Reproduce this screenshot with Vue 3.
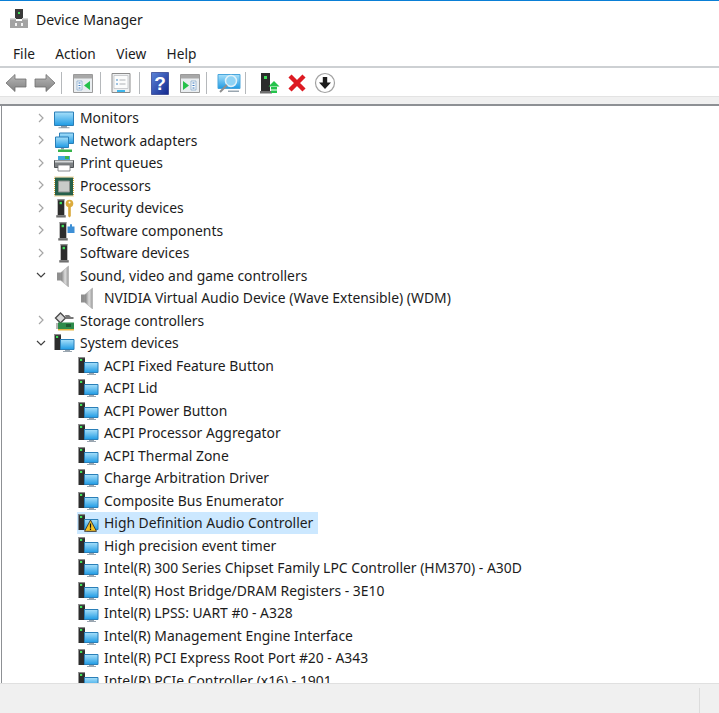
<script setup>
const rows = [
  { label: 'Monitors', icon: 'monitor', state: 'closed' },
  { label: 'Network adapters', icon: 'network', state: 'closed' },
  { label: 'Print queues', icon: 'printer', state: 'closed' },
  { label: 'Processors', icon: 'cpu', state: 'closed' },
  { label: 'Security devices', icon: 'security', state: 'closed' },
  { label: 'Software components', icon: 'softcomp', state: 'closed' },
  { label: 'Software devices', icon: 'tower', state: 'closed' },
  { label: 'Sound, video and game controllers', icon: 'speaker', state: 'open' },
  { label: 'NVIDIA Virtual Audio Device (Wave Extensible) (WDM)', icon: 'speaker', child: true },
  { label: 'Storage controllers', icon: 'storage', state: 'closed' },
  { label: 'System devices', icon: 'system', state: 'open' },
  { label: 'ACPI Fixed Feature Button', icon: 'system', child: true },
  { label: 'ACPI Lid', icon: 'system', child: true },
  { label: 'ACPI Power Button', icon: 'system', child: true },
  { label: 'ACPI Processor Aggregator', icon: 'system', child: true },
  { label: 'ACPI Thermal Zone', icon: 'system', child: true },
  { label: 'Charge Arbitration Driver', icon: 'system', child: true },
  { label: 'Composite Bus Enumerator', icon: 'system', child: true },
  { label: 'High Definition Audio Controller', icon: 'system', child: true, selected: true, warn: true },
  { label: 'High precision event timer', icon: 'system', child: true },
  { label: 'Intel(R) 300 Series Chipset Family LPC Controller (HM370) - A30D', icon: 'system', child: true },
  { label: 'Intel(R) Host Bridge/DRAM Registers - 3E10', icon: 'system', child: true },
  { label: 'Intel(R) LPSS: UART #0 - A328', icon: 'system', child: true },
  { label: 'Intel(R) Management Engine Interface', icon: 'system', child: true },
  { label: 'Intel(R) PCI Express Root Port #20 - A343', icon: 'system', child: true },
  { label: 'Intel(R) PCIe Controller (x16) - 1901', icon: 'system', child: true }
]
const menus = ['File', 'Action', 'View', 'Help']
</script>

<template>
  <div class="window">
    <svg class="defs" aria-hidden="true">
      <defs>
        <linearGradient id="scr" x1="0" y1="0" x2="0" y2="1">
          <stop offset="0" stop-color="#a8e0fa" />
          <stop offset="1" stop-color="#1f9be4" />
        </linearGradient>
        <linearGradient id="spk" x1="0" y1="0" x2="1" y2="0">
          <stop offset="0" stop-color="#7c7c7c" />
          <stop offset=".55" stop-color="#dcdcdc" />
          <stop offset="1" stop-color="#9a9a9a" />
        </linearGradient>
        <linearGradient id="arr" x1="0" y1="0" x2="0" y2="1">
          <stop offset="0" stop-color="#b8b8b8" />
          <stop offset="1" stop-color="#808080" />
        </linearGradient>
        <linearGradient id="hlp" x1="0" y1="0" x2="1" y2="1">
          <stop offset="0" stop-color="#5b84d8" />
          <stop offset="1" stop-color="#13288e" />
        </linearGradient>
        <symbol id="tw" viewBox="0 0 10 20">
          <path d="M1.500 0h7v17h-7z" fill="#2c2c2c" />
          <path d="M1.500 0h7v1.500h-7z" fill="#8a8a8a" />
          <path d="M3.500 3h2.500v2.500H3.500z" fill="#3fe05a" />
          <path d="M0 17h10v2.500H0z" fill="#6e6e6e" />
        </symbol>
        <symbol id="i-monitor" viewBox="0 0 22 22">
          <path d="M1.500 5h19v13.500h-19z" fill="url(#scr)" stroke="#2a7fb8" />
          <path d="M8 19h6v1.200H8zM5.500 20.200h11v1H5.500z" fill="#8f9ba6" />
        </symbol>
        <symbol id="i-network" viewBox="0 0 22 22">
          <path d="M6.500 3h14v10.500h-14z" fill="url(#scr)" stroke="#2a7fb8" />
          <path d="M2.500 7h13v10.500h-13z" fill="url(#scr)" stroke="#2a7fb8" />
          <path d="M8 18h3v1.500H8z" fill="#8f9ba6" />
          <path d="M5 19.500h14V22H5z" fill="#35b34a" />
        </symbol>
        <symbol id="i-printer" viewBox="0 0 22 22">
          <path d="M5 4h12v5H5z" fill="#3fa7dc" />
          <path d="M12 4h4v3h-4z" fill="#39b54a" />
          <path d="M1.500 8.500h19v7h-19z" fill="#7d8184" stroke="#4f5255" />
          <path d="M2 8.500h18v2H2z" fill="#d5d7d9" />
          <path d="M5 13h12v6H5z" fill="#fff" stroke="#6d7073" stroke-width=".8" />
        </symbol>
        <symbol id="i-cpu" viewBox="0 0 22 22">
          <path d="M2 2.500h18v18H2z" fill="#26604a" />
          <path d="M1.500 2h19v19h-19z" fill="none" stroke="#d8a93f" stroke-dasharray="1 1" />
          <path d="M5.500 6h11v11h-11z" fill="#c9cbc8" stroke="#8c8f8c" />
        </symbol>
        <symbol id="i-security" viewBox="0 0 22 22">
          <use href="#tw" x="3" y="2" width="10" height="19" />
          <circle cx="16.500" cy="6.500" r="3.800" fill="#dcab3c" />
          <circle cx="16.500" cy="5.500" r="1" fill="#fff" />
          <path d="M15.200 9.500h2.600v9.500l-1.200 1.500-1.400-1.300z" fill="#d9a83a" />
        </symbol>
        <symbol id="i-softcomp" viewBox="0 0 22 22">
          <use href="#tw" x="5" y="2" width="10" height="19" />
          <path d="M14.500 6.500h2.500V4.500a1.300 1.300 0 0 1 2 0v2h2.500V13h-7z" fill="#3d8fd6" />
        </symbol>
        <symbol id="i-tower" viewBox="0 0 22 22">
          <use href="#tw" x="6" y="2" width="10" height="19" />
        </symbol>
        <symbol id="i-speaker" viewBox="0 0 22 22">
          <path d="M4 7.500h4v8H4z" fill="#8e8e8e" />
          <path d="M8 7.500 15.500 1v21L8 15.500z" fill="url(#spk)" stroke="#a4a4a4" stroke-width=".5" />
        </symbol>
        <symbol id="i-storage" viewBox="0 0 22 22">
          <path d="M7.500 3 12.500 8 7.500 13 2.500 8z" fill="#d8d8d8" stroke="#4c4c4c" stroke-width="1.400" />
          <path d="M12 5h4l2 2h2.500v2H13z" fill="#777" />
          <path d="M3 13h2v6H3z" fill="#b5b5b5" />
          <path d="M5 12.500h16V19H5z" fill="#2e8b4a" />
          <path d="M5 19h16v1.500H5z" fill="#e1b341" />
          <path d="M13 14h5v3h-5z" fill="#1f5a32" />
        </symbol>
        <symbol id="i-system" viewBox="0 0 22 22">
          <path d="M1.500 2h6.500v16H1.500z" fill="#2c2c2c" />
          <path d="M1.500 2h6.500v1.200H1.500z" fill="#8a8a8a" />
          <path d="M3 4h2.200v2H3z" fill="#3fe05a" />
          <path d="M7.500 7.500h13.500v10H7.500z" fill="url(#scr)" stroke="#2a7fb8" />
          <path d="M12 18h5v1h-5zM10 19h9v1h-9z" fill="#9aa6b0" />
        </symbol>
      </defs>
    </svg>

    <header class="titlebar">
      <svg class="app-icon" viewBox="0 0 18 20">
        <path d="M5 0h8v10H5z" fill="#3a3a3a" />
        <path d="M8 3h2v2H8z" fill="#3fe05a" />
        <path d="M0 9h6v3h6V9h6v10H0z" fill="#a3a3a3" />
        <path d="M0 9h6v1.500H0zM12 9h6v1.500h-6z" fill="#d8d8d8" />
        <path d="M5 14h2v3H5zM11 14h2v3h-2z" fill="#f2f2f2" />
      </svg>
      <span class="title">Device Manager</span>
    </header>

    <nav class="menubar">
      <span v-for="m in menus" :key="m" class="menu">{{ m }}</span>
    </nav>

    <div class="toolbar">
      <div class="tg g1">
        <svg class="tool" viewBox="0 0 24 24"><path d="M2 12 11 3.500V8h11v8H11v4.500z" fill="url(#arr)" stroke="#6f6f6f" stroke-width=".8" /></svg>
        <svg class="tool" viewBox="0 0 24 24"><path d="M22 12 13 3.500V8H2v8h11v4.500z" fill="url(#arr)" stroke="#6f6f6f" stroke-width=".8" /></svg>
      </div>
      <div class="tg g2">
        <svg class="tool" viewBox="0 0 24 24">
          <path d="M2.500 3.500h19v18h-19z" fill="#e9edf0" stroke="#9b9b9b" />
          <path d="M3 4h18v3.500H3z" fill="#a8a8a8" />
          <path d="M6 10h5v9H6z" fill="#f7f9fb" stroke="#7fa3c7" stroke-width=".7" />
          <path d="M7.500 12h2M7.500 14.500h2M7.500 17h2" stroke="#3d7cc0" />
          <path d="M19 10v9l-6-4.500z" fill="#25c14a" />
        </svg>
      </div>
      <div class="tg g3">
        <svg class="tool" viewBox="0 0 24 24">
          <path d="M3 2.500h18v19H3z" fill="#eef0f1" stroke="#8c8c8c" />
          <path d="M5 4.500h14v13H5z" fill="#fbfcfc" stroke="#b9bcbf" stroke-width=".7" />
          <path d="M7 8h2v2H7zM7 12h2v2H7z" fill="#9ec3e2" />
          <path d="M10.500 9h6M10.500 13h6" stroke="#aeb2b6" />
          <path d="M8 19h8v2H8z" fill="#3db5ea" />
        </svg>
      </div>
      <div class="tg g4">
        <svg class="tool" viewBox="0 0 24 24">
          <path d="M3.500 1.500h17v22h-17z" fill="url(#hlp)" stroke="#12237a" stroke-width=".6" />
          <text x="12" y="19" text-anchor="middle" class="qm">?</text>
        </svg>
        <svg class="tool" viewBox="0 0 24 24">
          <path d="M2.500 3.500h19v18h-19z" fill="#e9edf0" stroke="#9b9b9b" />
          <path d="M3 4h18v3.500H3z" fill="#a8a8a8" />
          <path d="M5 10v9l6-4.500z" fill="#25c14a" />
          <path d="M13 10h5v9h-5z" fill="#f7f9fb" stroke="#7fa3c7" stroke-width=".7" />
          <path d="M14.500 12h2M14.500 14.500h2M14.500 17h2" stroke="#3d7cc0" />
        </svg>
      </div>
      <div class="tg g5">
        <svg class="tool" viewBox="0 0 24 24">
          <path d="M1 3.500h22v14H1z" fill="url(#scr)" stroke="#4aa6dc" />
          <circle cx="14" cy="10" r="5.500" fill="#8fd3f5" stroke="#dff1f9" stroke-width="1.500" />
          <path d="M10 14 3 21" stroke="#8f8f8f" stroke-width="2" />
          <path d="M11 19.500h11v1.500H11z" fill="#9aa6b0" />
        </svg>
      </div>
      <div class="tg g6">
        <svg class="tool" viewBox="0 0 24 24">
          <path d="M4 2h9v18H4z" fill="#2c2c2c" />
          <path d="M7 5h3v3H7z" fill="#3fe05a" />
          <path d="M3 20h12v2.500H3z" fill="#6e6e6e" />
          <path d="M11.500 15.500 17 10l5.500 5.500z" fill="#24c34b" />
          <path d="M14 16h6v2.500h-6zM14 19.500h6V22h-6z" fill="#24c34b" />
        </svg>
        <svg class="tool" viewBox="0 0 24 24">
          <path d="M5 5 19 19M19 5 5 19" stroke="#dd1a22" stroke-width="4.400" />
        </svg>
        <svg class="tool" viewBox="0 0 24 24">
          <circle cx="12" cy="12" r="9.500" fill="#fff" stroke="#a2a2a2" stroke-width="1.200" />
          <path d="M9.800 6h4.400v5.500H18L12 18 6 11.500h3.800z" fill="#1c1c1c" />
        </svg>
      </div>
    </div>

    <div class="strip"></div>

    <main class="tree">
      <div v-for="r in rows" :key="r.label" class="row" :class="{ child: r.child }">
        <span class="chev">
          <svg v-if="r.state === 'closed'" viewBox="0 0 10 10" class="chev-i"><path d="M3 1l4 4-4 4" fill="none" stroke="#a6a6a6" stroke-width="1.200" /></svg>
          <svg v-else-if="r.state === 'open'" viewBox="0 0 10 10" class="chev-i"><path d="M1 3l4 4 4-4" fill="none" stroke="#404040" stroke-width="1.200" /></svg>
        </span>
        <span class="item" :class="{ selected: r.selected }">
          <span class="icon-wrap">
            <svg class="icon"><use :href="'#i-' + r.icon" /></svg>
            <svg v-if="r.warn" class="warn" viewBox="0 0 13 13">
              <path d="M6.500 1 12.500 12.300H.5z" fill="#f7c325" stroke="#333" stroke-width=".9" />
              <path d="M5.900 4.500h1.200v4.300H5.900zM5.900 9.600h1.200v1.300H5.900z" fill="#111" />
            </svg>
          </span>
          <span class="label">{{ r.label }}</span>
        </span>
      </div>
    </main>

    <footer class="status">
      <span class="status-sep"></span>
    </footer>
  </div>
</template>

<style scoped>
.window {
  height: 713px;
  display: flex;
  flex-direction: column;
  overflow: hidden;
  background: #fff;
  border-top: 1px solid #0a7fd6;
  box-sizing: border-box;
  font-family: "Noto Sans", "Open Sans", sans-serif;
  color: #1c1c1c;
}
.defs {
  position: absolute;
  width: 0;
  height: 0;
}
.titlebar {
  height: 39px;
  flex: none;
  display: flex;
  align-items: center;
  padding-left: 10px;
  padding-bottom: 3px;
  box-sizing: border-box;
}
.app-icon {
  width: 18px;
  height: 20px;
  margin-right: 8px;
}
.title {
  font-size: 14.1px;
}
.menubar {
  height: 26px;
  flex: none;
  display: flex;
  align-items: center;
  padding-left: 13px;
  gap: 20.4px;
  font-size: 13.7px;
}
.toolbar {
  height: 27px;
  flex: none;
  display: flex;
  align-items: center;
  border-top: 2px solid #cdd0d3;
  padding-left: 4px;
  padding-top: 1px;
}
.tg {
  display: flex;
  align-items: center;
  gap: 5px;
  height: 22px;
  border-right: 1px solid #b5b8bb;
}
.tg:last-child {
  border-right: none;
}
.tool {
  width: 24px;
  height: 24px;
  flex: none;
}
.g1 { padding-right: 4px; }
.g2 { padding: 0 5px 0 9px; }
.g3 { padding: 0 6px 0 8px; }
.g4 { padding: 0 4px 0 8px; gap: 6px; }
.g5 { padding: 0 4px 0 10px; }
.g6 { padding-left: 11px; gap: 4px; }
.qm {
  font-family: "Liberation Sans", sans-serif;
  font-size: 19px;
  font-weight: 700;
  fill: #fff;
}
.strip {
  height: 7px;
  flex: none;
  background: #f0f0f0;
  border-top: 1px solid #e3e3e3;
  border-bottom: 2px solid #8d9094;
}
.tree {
  flex: 1;
  min-height: 0;
  overflow: hidden;
  margin-left: 1px;
  padding-top: 0.6px;
  border-left: 1px solid #8d9094;
}
.row {
  height: 22.5px;
  display: flex;
  align-items: center;
  padding-left: 32px;
}
.row.child {
  padding-left: 56px;
}
.chev {
  width: 18px;
  height: 12px;
  flex: none;
  display: flex;
  align-items: center;
  margin-left: 2px;
  margin-right: -2px;
}
.chev-i {
  width: 10px;
  height: 10px;
}
.item {
  display: flex;
  align-items: center;
  height: 21.5px;
  padding-right: 5px;
  margin-left: 1px;
}
.item.selected {
  background: #cce8ff;
}
.icon-wrap {
  position: relative;
  width: 22px;
  height: 22px;
  flex: none;
}
.icon {
  display: block;
  width: 22px;
  height: 22px;
  margin-top: 0.5px;
}
.warn {
  position: absolute;
  left: 7px;
  top: 7.5px;
  width: 13px;
  height: 13px;
}
.label {
  margin-left: 5px;
  font-size: 13.9px;
  white-space: nowrap;
}
.status {
  height: 30px;
  flex: none;
  display: flex;
  justify-content: flex-end;
  background: #f0f0f0;
  border-top: 1px solid #e0e0e0;
  box-sizing: border-box;
  padding-top: 4px;
  padding-right: 19px;
}
.status-sep {
  width: 1px;
  background: #dcdcdc;
}
</style>
